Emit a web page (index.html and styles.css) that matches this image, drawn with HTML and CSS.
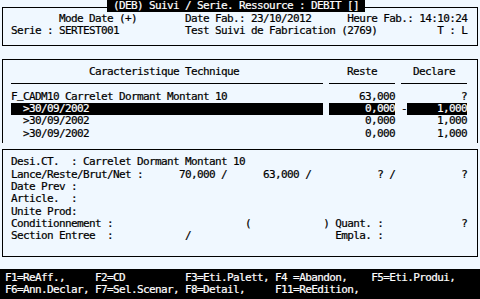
FILE: index.html
```html
<!DOCTYPE html>
<html>
  <head>
    <meta charset="utf-8" />
    <link rel="stylesheet" href="styles.css">
  </head>
  <body>
    <div class="screen">
      <div class="box box-head">
        <div class="screen-title"> (DEB) Suivi / Serie. Ressource : DEBIT [] </div>
        <div class="line">        Mode Date (+)        Date Fab.: 23/10/2012      Heure Fab.: 14:10:24</div>
        <div class="line">Serie : SERTEST001           Test Suivi de Fabrication (2769)          T : L</div>
      </div>

      <div class="box box-list">
        <div class="grid">
          <div class="cell head-main">Caracteristique Technique</div>
          <div class="cell center">Reste</div>
          <div class="cell center">Declare</div>

          <div class="rule"></div>
          <div class="rule"></div>
          <div class="rule"></div>

          <div class="cell">F<span class="low">_</span>CADM10 Carrelet Dormant Montant 10</div>
          <div class="cell num">63,000</div>
          <div class="cell num">?</div>

          <div class="cell sub selected">&gt;30/09/2002</div>
          <div class="cell num selected">0,000</div>
          <div class="cell declare"><span class="mark">-</span><span class="field selected">1,000</span></div>

          <div class="cell sub">&gt;30/09/2002</div>
          <div class="cell num">0,000</div>
          <div class="cell num">1,000</div>

          <div class="cell sub">&gt;30/09/2002</div>
          <div class="cell num">0,000</div>
          <div class="cell num">1,000</div>
        </div>
      </div>

      <div class="box box-detail">
        <div class="line">Desi.CT.  : Carrelet Dormant Montant 10</div>
        <div class="line">Lance/Reste/Brut/Net :      70,000 /      63,000 /           ? /           ?</div>
        <div class="line">Date Prev :</div>
        <div class="line">Article.  :</div>
        <div class="line">Unite Prod:</div>
        <div class="line">Conditionnement :                      (            ) Quant. :             ?</div>
        <div class="line">Section Entree  :            /                        Empla. :</div>
      </div>

      <div class="keys">
        <div class="line">F1=ReAff.,     F2=CD          F3=Eti.Palett, F4 =Abandon,    F5=Eti.Produi,</div>
        <div class="line">F6=Ann.Declar, F7=Sel.Scenar, F8=Detail,     F11=ReEdition,</div>
      </div>
    </div>
  </body>
</html>
```

FILE: styles.css
```css
* {
  margin: 0;
  padding: 0;
  box-sizing: border-box;
}

body {
  width: 480px;
  height: 299px;
  overflow: hidden;
  background-color: #f0f8ff;
  color: #000;
  font-family: "DejaVu Sans Mono", monospace;
  font-size: 11px;
  letter-spacing: -0.62px;
  line-height: 12.4px;
  -webkit-text-stroke: 0.2px currentColor;
}

.screen {
  display: flex;
  flex-direction: column;
  height: 299px;
}

.line {
  height: 12.4px;
  white-space: pre;
}

.box {
  margin: 0 2px;
  border: 1px solid #000;
}

/* top block, title sits on the border */
.box-head {
  position: relative;
  margin-top: 7px;
  padding: 5px 0 7px 8px;
}

.screen-title {
  position: absolute;
  top: -8px;
  left: 104px;
  height: 12px;
  line-height: 12px;
  background: #000;
  color: #fff;
  white-space: pre;
}

/* list block, open at the bottom */
.box-list {
  margin-top: 13px;
  border-bottom: none;
  padding: 6px 0 3px 8px;
}

.grid {
  display: grid;
  grid-template-columns: 312px 66px 66px;
  grid-auto-rows: 12.4px;
  column-gap: 6px;
  line-height: 11px;
}

.cell {
  white-space: pre;
}

/* the font puts "_" below the row, lift it without growing the line */
.low {
  vertical-align: 2px;
  line-height: 0;
}

.head-main {
  padding-left: 78px;
}

.center {
  text-align: center;
}

.num {
  text-align: right;
}

.rule {
  height: 6px;
  border-bottom: 1px solid #000;
}

.sub {
  padding-left: 12px;
}

.selected {
  background: #000;
  color: #fff;
}

.declare {
  display: flex;
}

.mark {
  width: 6px;
}

.field {
  flex: 1;
  text-align: right;
}

.box-detail {
  margin-top: 6px;
  padding: 6px 0 13px 8px;
}

.keys {
  flex: 1;
  margin-top: 12px;
  padding: 3px 0 0 5px;
  background: #000;
  color: #fff;
}
```
